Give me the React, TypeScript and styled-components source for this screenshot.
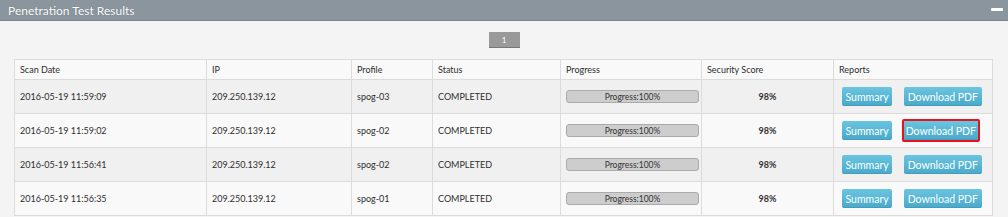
import React from 'react';
import styled, { createGlobalStyle } from 'styled-components';

const Global = createGlobalStyle`
  html, body {
    margin: 0;
    padding: 0;
    background: #f4f4f4;
    font-family: Lato, "Open Sans", sans-serif;
    color: #333;
  }
`;

const Panel = styled.div`
  width: 1008px;
  height: 217px;
  overflow: hidden;
  background: #f4f4f4;
`;

const PanelHeader = styled.div`
  height: 20px;
  background: #8a959e;
  border-bottom: 1px solid #7c868f;
  display: flex;
  align-items: center;
  justify-content: space-between;
  padding: 0 5px 0 8px;
`;

const Title = styled.span`
  color: #fff;
  font-size: 12px;
  text-shadow: 0 0 1px rgba(0, 0, 0, 0.3);
`;

const Minimize = styled.span`
  width: 12px;
  height: 3px;
  background: #fff;
  border-radius: 1px;
  margin-bottom: 1px;
`;

const Pager = styled.div`
  display: flex;
  justify-content: center;
  padding: 11px 0 12px 0;
`;

const PageButton = styled.span`
  width: 31px;
  height: 15px;
  background: #999;
  color: #fff;
  font-size: 8px;
  display: flex;
  align-items: center;
  justify-content: center;
  box-shadow: 0 1px 0 #777;
`;

const Table = styled.table`
  margin-left: 14px;
  width: 978px;
  border-collapse: collapse;
  table-layout: fixed;
  font-size: 9px;
  color: #2e2e2e;
`;

const Col = styled.col<{ $w: number }>`
  width: ${p => p.$w}px;
`;

const HeadCell = styled.th`
  height: 19px;
  padding: 0 5px;
  text-align: left;
  font-weight: normal;
  background: #f9f9f9;
  border: 1px solid #dcdcdc;
`;

const Row = styled.tr<{ $odd: boolean }>`
  background: ${p => (p.$odd ? '#f0f0f0' : '#f9f9f9')};
`;

const Cell = styled.td<{ $center?: boolean }>`
  height: 33px;
  padding: 0 5px;
  border: 1px solid #dcdcdc;
  text-align: ${p => (p.$center ? 'center' : 'left')};
  vertical-align: middle;
  white-space: nowrap;
`;

const Score = styled.span`
  font-weight: bold;
  color: #333;
`;

const ProgressBar = styled.div`
  width: 131px;
  height: 11px;
  background: #cdcdcd;
  border: 1px solid #aaa;
  border-radius: 3px;
  display: flex;
  align-items: center;
  justify-content: center;
  font-size: 8.5px;
  color: #333;
`;

const Buttons = styled.div`
  display: flex;
  gap: 12px;
  padding-left: 3px;
`;

const ReportButton = styled.span<{ $focus?: boolean }>`
  height: 19px;
  padding: 0 ${p => (p.$focus ? '1.5px' : '3.5px')};
  display: inline-flex;
  align-items: center;
  color: #fff;
  font-size: 10.5px;
  background: linear-gradient(#6ac5e0, #49a9ca);
  border: ${p => (p.$focus ? '2px solid #e8141b' : '0')};
  margin: ${p => (p.$focus ? '-2px' : '0')};
  border-radius: 2px;
  box-shadow: inset 0 -1px 0 rgba(0, 0, 0, 0.08);
`;

const rows = [
  { date: '2016-05-19 11:59:09', profile: 'spog-03' },
  { date: '2016-05-19 11:59:02', profile: 'spog-02', focus: true },
  { date: '2016-05-19 11:56:41', profile: 'spog-02' },
  { date: '2016-05-19 11:56:35', profile: 'spog-01' },
];

export default function App() {
  return (
    <Panel>
      <Global />
      <PanelHeader>
        <Title>Penetration Test Results</Title>
        <Minimize />
      </PanelHeader>
      <Pager>
        <PageButton>1</PageButton>
      </Pager>
      <Table>
        <colgroup>
          <Col $w={192} />
          <Col $w={145} />
          <Col $w={81} />
          <Col $w={128} />
          <Col $w={141} />
          <Col $w={132} />
          <Col $w={159} />
        </colgroup>
        <thead>
          <tr>
            <HeadCell>Scan Date</HeadCell>
            <HeadCell>IP</HeadCell>
            <HeadCell>Profile</HeadCell>
            <HeadCell>Status</HeadCell>
            <HeadCell>Progress</HeadCell>
            <HeadCell>Security Score</HeadCell>
            <HeadCell>Reports</HeadCell>
          </tr>
        </thead>
        <tbody>
          {rows.map((r, i) => (
            <Row key={r.date} $odd={i % 2 === 0}>
              <Cell>{r.date}</Cell>
              <Cell>209.250.139.12</Cell>
              <Cell>{r.profile}</Cell>
              <Cell>COMPLETED</Cell>
              <Cell>
                <ProgressBar>Progress:100%</ProgressBar>
              </Cell>
              <Cell $center>
                <Score>98%</Score>
              </Cell>
              <Cell>
                <Buttons>
                  <ReportButton>Summary</ReportButton>
                  <ReportButton $focus={r.focus}>Download PDF</ReportButton>
                </Buttons>
              </Cell>
            </Row>
          ))}
        </tbody>
      </Table>
    </Panel>
  );
}
